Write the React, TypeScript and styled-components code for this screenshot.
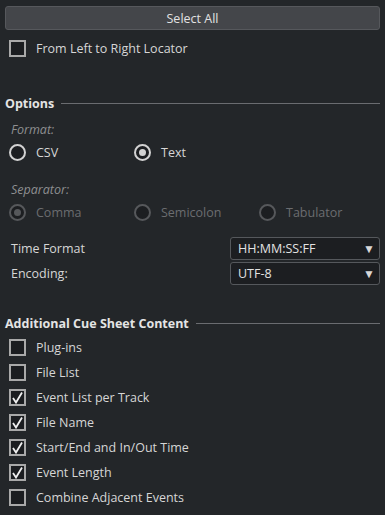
import styled, { createGlobalStyle } from "styled-components";

const GlobalStyle = createGlobalStyle`
  body {
    margin: 0;
    background: #232629;
    font-family: "Open Sans", "Liberation Sans", sans-serif;
    font-size: 12.5px;
    color: #d6d6d6;
  }
`;

const Panel = styled.div`
  display: flex;
  flex-direction: column;
  padding: 6px 5px 0 5px;
  width: 375px;
`;

const Button = styled.div`
  height: 22px;
  border: 1px solid #56585c;
  border-radius: 3px;
  background: #44464a;
  display: flex;
  align-items: center;
  justify-content: center;
  color: #e2e2e2;
`;

const CheckRow = styled.label<{ $top?: number }>`
  display: flex;
  align-items: center;
  height: 25px;
  padding-left: 4px;
  margin-top: ${(p) => p.$top ?? 0}px;
  gap: 10px;
`;

const Box = styled.span`
  width: 13px;
  height: 13px;
  border: 2px solid #a9a9a9;
  background: #1b1d20;
  display: flex;
  align-items: center;
  justify-content: center;
`;

const Header = styled.div<{ $top: number }>`
  display: flex;
  align-items: center;
  gap: 7px;
  height: 20px;
  margin-top: ${(p) => p.$top}px;
  font-weight: 700;
  color: #e4e4e4;
  &::after {
    content: "";
    flex: 1;
    height: 1px;
    background: #6a6c70;
  }
`;

const SubLabel = styled.div<{ $top: number }>`
  height: 22px;
  display: flex;
  align-items: center;
  padding-left: 6px;
  margin-top: ${(p) => p.$top}px;
  font-style: italic;
  color: #8e8f91;
`;

const RadioGrid = styled.div`
  display: grid;
  grid-template-columns: 125px 125px 1fr;
  height: 25px;
  padding-left: 4px;
`;

const Radio = styled.div<{ $disabled?: boolean }>`
  display: flex;
  align-items: center;
  gap: 10px;
  color: ${(p) => (p.$disabled ? "#6b6d70" : "#d6d6d6")};
`;

const Circle = styled.span<{ $on?: boolean; $disabled?: boolean }>`
  width: 13px;
  height: 13px;
  border-radius: 50%;
  border: 2px solid ${(p) => (p.$disabled ? "#56585b" : "#d2d2d2")};
  background: #1c1e21;
  display: flex;
  align-items: center;
  justify-content: center;
  &::after {
    content: "";
    display: ${(p) => (p.$on ? "block" : "none")};
    width: 7px;
    height: 7px;
    border-radius: 50%;
    background: ${(p) => (p.$disabled ? "#56585b" : "#d2d2d2")};
  }
`;

const FieldRow = styled.div<{ $top?: number }>`
  display: flex;
  align-items: center;
  justify-content: space-between;
  height: 25px;
  padding-left: 6px;
  margin-top: ${(p) => p.$top ?? 0}px;
`;

const Select = styled.div`
  width: 137px;
  height: 21px;
  border: 1px solid #55585c;
  border-radius: 3px;
  background: #1c1e21;
  display: flex;
  align-items: center;
  justify-content: space-between;
  padding: 0 4px 0 7px;
  color: #e2e2e2;
  &::after {
    content: "▼";
    font-size: 12px;
    color: #d8d8d8;
  }
`;

const Check = () => (
  <svg width="13" height="13" viewBox="0 0 13 13">
    <path d="M2 7 L5 11.5 L11 1.5" fill="none" stroke="#f0f0f0" strokeWidth="1.8" />
  </svg>
);

const Item = ({ label, on, top }: { label: string; on?: boolean; top?: number }) => (
  <CheckRow $top={top}>
    <Box>{on && <Check />}</Box>
    {label}
  </CheckRow>
);

const items: [string, boolean][] = [
  ["Plug-ins", false],
  ["File List", false],
  ["Event List per Track", true],
  ["File Name", true],
  ["Start/End and In/Out Time", true],
  ["Event Length", true],
  ["Combine Adjacent Events", false],
];

export default function App() {
  return (
    <>
      <GlobalStyle />
      <Panel>
        <Button>Select All</Button>
        <Item label="From Left to Right Locator" top={6} />

        <Header $top={32}>Options</Header>
        <SubLabel $top={5}>Format:</SubLabel>
        <RadioGrid>
          <Radio>
            <Circle />
            CSV
          </Radio>
          <Radio>
            <Circle $on />
            Text
          </Radio>
        </RadioGrid>
        <SubLabel $top={13}>Separator:</SubLabel>
        <RadioGrid>
          <Radio $disabled>
            <Circle $on $disabled />
            Comma
          </Radio>
          <Radio $disabled>
            <Circle $disabled />
            Semicolon
          </Radio>
          <Radio $disabled>
            <Circle $disabled />
            Tabulator
          </Radio>
        </RadioGrid>
        <FieldRow $top={11}>
          Time Format
          <Select>HH:MM:SS:FF</Select>
        </FieldRow>
        <FieldRow>
          Encoding:
          <Select>UTF-8</Select>
        </FieldRow>

        <Header $top={27}>Additional Cue Sheet Content</Header>
        <div style={{ height: 2 }} />
        {items.map(([label, on]) => (
          <Item key={label} label={label} on={on} />
        ))}
      </Panel>
    </>
  );
}
